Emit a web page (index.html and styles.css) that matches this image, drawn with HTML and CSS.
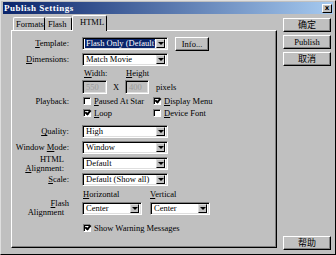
FILE: index.html
```html
<!DOCTYPE html>
<html lang="en">
<head>
    <meta charset="UTF-8">
    <title>Publish Settings</title>
    <link rel="stylesheet" href="styles.css">
</head>
<body>
    <div class="dialog">
        <div class="titlebar">
            <span class="title">Publish Settings</span>
            <span class="close">x</span>
        </div>
        <div class="content">
            <div class="sheet">
                <div class="tabs">
                    <div class="tab tab-formats">Formats</div>
                    <div class="tab tab-flash">Flash</div>
                    <div class="tab tab-html active">HTML</div>
                </div>
                <div class="panel">
                    <!-- template -->
                    <div class="row row-template">
                        <div class="lbl"><u>T</u>emplate:</div>
                        <div class="select wide highlighted"><span class="val">Flash Only (Default)</span><span class="arrow"></span></div>
                        <button class="btn info">Info...</button>
                    </div>
                    <div class="row row-dims">
                        <div class="lbl"><u>D</u>imensions:</div>
                        <div class="select wide"><span class="val">Match Movie</span><span class="arrow"></span></div>
                    </div>
                    <div class="row row-sublabels">
                        <div class="lbl"></div>
                        <span class="sub sub-w"><u>W</u>idth:</span>
                        <span class="sub sub-h"><u>H</u>eight</span>
                    </div>
                    <div class="row row-size">
                        <div class="lbl"></div>
                        <div class="input in-w">550</div>
                        <span class="times">X</span>
                        <div class="input in-h">400</div>
                        <span class="pixels">pixels</span>
                    </div>
                    <div class="row row-check row-play1">
                        <div class="lbl">Playback:</div>
                        <div class="check col1"><span class="box"></span><u>P</u>aused At Star</div>
                        <div class="check col2"><span class="box checked"></span><u>D</u>isplay Menu</div>
                    </div>
                    <div class="row row-check row-play2">
                        <div class="lbl"></div>
                        <div class="check col1"><span class="box checked"></span><u>L</u>oop</div>
                        <div class="check col2"><span class="box"></span><u>D</u>evice Font</div>
                    </div>
                    <div class="row row-quality">
                        <div class="lbl"><u>Q</u>uality:</div>
                        <div class="select wide"><span class="val">High</span><span class="arrow"></span></div>
                    </div>
                    <div class="row row-mode">
                        <div class="lbl">Window <u>M</u>ode:</div>
                        <div class="select wide"><span class="val">Window</span><span class="arrow"></span></div>
                    </div>
                    <div class="row row-align">
                        <div class="lbl two short">HTML<br><u>A</u>lignment:</div>
                        <div class="select wide"><span class="val">Default</span><span class="arrow"></span></div>
                    </div>
                    <div class="row row-scale">
                        <div class="lbl"><u>S</u>cale:</div>
                        <div class="select wide"><span class="val">Default (Show all)</span><span class="arrow"></span></div>
                    </div>
                    <div class="row row-hv">
                        <div class="lbl"></div>
                        <span class="sub sub-hz"><u>H</u>orizontal</span>
                        <span class="sub"><u>V</u>ertical</span>
                    </div>
                    <div class="row row-falign">
                        <div class="lbl two"><u>F</u>lash<br><span class="indent">Alignment</span></div>
                        <div class="select narrow"><span class="val">Center</span><span class="arrow"></span></div>
                        <div class="select narrow"><span class="val">Center</span><span class="arrow"></span></div>
                    </div>
                    <div class="row row-check row-warn">
                        <div class="lbl"></div>
                        <div class="check"><span class="box checked"></span>Show Warning Messages</div>
                    </div>
                </div>
            </div>
            <div class="side">
                <button class="btn side-btn cjk">确定</button>
                <button class="btn side-btn">Publish</button>
                <button class="btn side-btn cjk">取消</button>
                <div class="spacer"></div>
                <button class="btn side-btn cjk">帮助</button>
            </div>
        </div>
    </div>
</body>
</html>
```

FILE: styles.css
```css
* {
    box-sizing: border-box;
}

body {
    margin: 0;
    background: #c0c0c0;
    font-family: "Liberation Serif", "DejaVu Serif", serif;
    font-size: 8.5px;
    color: #000;
}

.dialog {
    width: 336px;
    height: 255px;
    background: #c0c0c0;
    border: 1px solid;
    border-color: #dfdfdf #000 #000 #dfdfdf;
    padding: 1px 2px 2px 2px;
    display: flex;
    flex-direction: column;
}

.titlebar {
    height: 12px;
    flex: none;
    background: linear-gradient(to right, #0a246a, #a6caf0);
    color: #fff;
    display: flex;
    align-items: center;
    justify-content: space-between;
    padding: 0 1px 0 1px;
}

.title {
    font-weight: bold;
    font-size: 9px;
    letter-spacing: 0.5px;
}

.close {
    width: 10px;
    height: 9px;
    background: #c0c0c0;
    color: #000;
    border: 1px solid;
    border-color: #fff #000 #000 #fff;
    font-family: "DejaVu Sans", sans-serif;
    font-size: 7px;
    font-weight: bold;
    line-height: 6px;
    text-align: center;
}

.content {
    flex: 1;
    display: flex;
    padding: 1px 0 0 8px;
}

.sheet {
    width: 266px;
    display: flex;
    flex-direction: column;
    margin-bottom: 4px;
}

.tabs {
    display: flex;
    align-items: flex-end;
    height: 15px;
    padding-left: 2px;
}

.tab {
    height: 13px;
    border-top: 1px solid #fff;
    border-left: 1px solid #fff;
    border-right: 1px solid #000;
    border-radius: 2px 2px 0 0;
    padding: 2px 0 0 2px;
    line-height: 9px;
    white-space: nowrap;
}

.tab-formats {
    width: 32px;
}

.tab-flash {
    width: 27px;
    border-left: none;
    padding-left: 3px;
}

.tab-html {
    width: 35px;
    height: 16px;
    margin-bottom: -1px;
    background: #c0c0c0;
    position: relative;
    padding-left: 7px;
}

.panel {
    flex: 1;
    border: 1px solid;
    border-color: #fff #000 #000 #fff;
    box-shadow: inset -1px -1px #808080;
    padding-top: 6px;
}

.row {
    display: flex;
    align-items: center;
    height: 13px;
    margin-top: 3px;
}

.row-template {
    margin-top: 0;
}

.lbl {
    width: 57px;
    margin-right: 13px;
    text-align: right;
    flex: none;
    line-height: 9px;
    white-space: nowrap;
}

.lbl.short {
    padding-right: 5px;
}

.indent {
    padding-right: 5px;
}

.select {
    height: 13px;
    background: #fff;
    border: 1px solid;
    border-color: #808080 #fff #fff #808080;
    box-shadow: inset 1px 1px #000, inset -1px -1px #dfdfdf;
    display: flex;
    padding: 1px 2px 1px 2px;
}

.select.wide {
    width: 86px;
}

.select.narrow {
    width: 60px;
    margin-right: 8px;
}

.val {
    flex: 1;
    white-space: nowrap;
    overflow: hidden;
    line-height: 9px;
    padding-left: 1px;
    margin-top: 0;
}

.highlighted .val {
    background: #0a246a;
    color: #fff;
    margin-right: 1px;
}

.arrow {
    width: 9px;
    flex: none;
    background: #c0c0c0;
    border: 1px solid;
    border-color: #dfdfdf #000 #000 #dfdfdf;
    display: flex;
    align-items: center;
    justify-content: center;
}

.arrow::after {
    content: "";
    border-left: 3px solid transparent;
    border-right: 3px solid transparent;
    border-top: 3px solid #000;
}

.btn {
    font-family: "Liberation Serif", serif;
    font-size: 8.5px;
    background: #c0c0c0;
    border: 1px solid;
    border-color: #fff #000 #000 #fff;
    box-shadow: inset -1px -1px #808080;
    padding: 0;
    color: #000;
    line-height: 10px;
}

.info {
    width: 34px;
    height: 14px;
    margin-left: 7px;
}

.row-sublabels {
    height: 11px;
    margin-top: 1px;
    align-items: flex-end;
}

.sub {
    line-height: 10px;
}

.sub-w {
    width: 44px;
    padding-left: 2px;
}

.row-size {
    height: 14px;
    margin-top: 2px;
}

.input {
    height: 14px;
    background: #c0c0c0;
    border: 1px solid;
    border-color: #808080 #fff #fff #808080;
    box-shadow: inset 1px 1px #000, inset -1px -1px #dfdfdf;
    color: #9a9a9a;
    padding: 1px 3px;
    line-height: 10px;
}

.in-w {
    width: 25px;
}

.in-h {
    width: 24px;
}

.times {
    width: 18px;
    text-align: center;
}

.pixels {
    margin-left: 7px;
}

.row-check {
    height: 10px;
}

.row-play1 {
    margin-top: 2px;
}

.row-play2 {
    margin-top: 2px;
}

.check {
    display: flex;
    align-items: center;
    white-space: nowrap;
    padding-left: 1px;
    line-height: 10px;
}

.col1 {
    width: 70px;
    overflow: hidden;
}

.box {
    width: 8px;
    height: 8px;
    flex: none;
    background: #fff;
    border: 1px solid;
    border-color: #808080 #fff #fff #808080;
    box-shadow: inset 1px 1px #000;
    margin-right: 3px;
    position: relative;
}

.box.checked::after {
    content: "";
    position: absolute;
    left: 1px;
    top: 0px;
    width: 4px;
    height: 2px;
    border-left: 2px solid #000;
    border-bottom: 2px solid #000;
    transform: rotate(-50deg);
}

.row-quality {
    margin-top: 7px;
}

.row-hv {
    height: 11px;
    margin-top: 2px;
    align-items: flex-end;
}

.sub-hz {
    width: 68px;
    padding-left: 1px;
}

.row-falign {
    margin-top: 2px;
    height: 14px;
}

.row-warn {
    margin-top: 8px;
    height: 10px;
}

.side {
    width: 48px;
    margin-left: 6px;
    display: flex;
    flex-direction: column;
    padding: 3px 0 2px;
}

.side-btn {
    height: 14px;
    width: 48px;
    margin-bottom: 3px;
}

.side-btn:last-child {
    margin-bottom: 0;
}

.cjk {
    font-family: "Noto Sans CJK SC", sans-serif;
    font-size: 9px;
}

.spacer {
    flex: 1;
}
```
